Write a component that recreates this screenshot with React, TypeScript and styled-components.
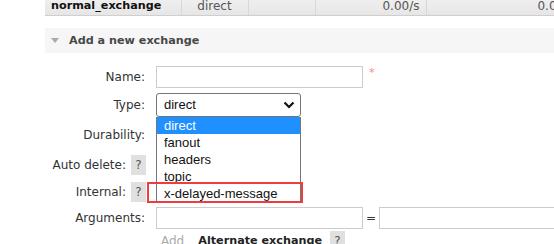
import React from 'react';
import styled, { createGlobalStyle } from 'styled-components';

const GlobalStyle = createGlobalStyle`
  html, body {
    margin: 0;
    padding: 0;
    background: #fff;
    overflow: hidden;
  }
  body {
    font-family: 'DejaVu Sans', Verdana, sans-serif;
    font-size: 12px;
    color: #333;
  }
`;

const Page = styled.div`
  width: 554px;
  height: 244px;
  overflow: hidden;
  padding-left: 45px;
  box-sizing: border-box;
`;

const ListTable = styled.table`
  border-collapse: collapse;
  table-layout: fixed;
  width: 536px;
  margin-top: -3px;
`;

const Cell = styled.td<{ w: number; align?: 'left' | 'center' | 'right'; strong?: boolean }>`
  width: ${(p) => p.w}px;
  height: 18px;
  padding: 0 6px;
  box-sizing: border-box;
  background: linear-gradient(#f0f0f0, #e6e6e6);
  border-bottom: 1px solid #cfcfcf;
  border-right: 1px solid #d8d8d8;
  text-align: ${(p) => p.align || 'left'};
  font-weight: ${(p) => (p.strong ? 'bold' : 'normal')};
  font-size: ${(p) => (p.strong ? '11.2px' : '12px')};
  color: ${(p) => (p.strong ? '#111' : '#555')};
  white-space: nowrap;
  overflow: hidden;
`;

const SectionHead = styled.div`
  margin-top: 12px;
  height: 25px;
  background: #f6f6f6;
  display: flex;
  align-items: center;
  padding-left: 6px;
  gap: 10px;
  font-weight: bold;
  font-size: 11.2px;
  color: #484848;
`;

const Caret = styled.span`
  width: 0;
  height: 0;
  border-left: 4px solid transparent;
  border-right: 4px solid transparent;
  border-top: 5px solid #aaa;
`;

const Form = styled.div`
  margin-top: 10px;
  display: grid;
  grid-template-columns: 100px 1fr;
  grid-template-rows: 28px 28px 33px 26px 29px 22px 24px;
  column-gap: 11px;
`;

const Label = styled.div`
  display: flex;
  justify-content: flex-end;
  align-items: center;
  gap: 5px;
  color: #333;
  white-space: nowrap;
`;

const Help = styled.span`
  width: 15px;
  height: 20px;
  background: #e0e0e0;
  color: #555;
  display: flex;
  align-items: center;
  justify-content: center;
  margin-right: -1px;
  font-weight: normal;
  font-size: 12px;
`;

const Field = styled.div`
  display: flex;
  align-items: center;
  position: relative;
  white-space: nowrap;
`;

const TextInput = styled.div<{ w: number }>`
  width: ${(p) => p.w}px;
  height: 22px;
  border: 1px solid #cccccc;
  box-sizing: border-box;
  background: #fff;
  flex-shrink: 0;
`;

const Required = styled.span`
  color: #f48a8a;
  margin-left: 6px;
  margin-top: -8px;
  font-size: 11px;
`;

const Equals = styled.span`
  margin: 0 3px;
  color: #333;
`;

const Select = styled.div`
  width: 145px;
  height: 24px;
  border: 1px solid #767676;
  border-radius: 3px;
  box-sizing: border-box;
  display: flex;
  align-items: center;
  justify-content: space-between;
  padding: 0 5px 0 7px;
  font-family: 'Liberation Sans', Arial, sans-serif;
  font-size: 13px;
  color: #111;
  background: #fff;
`;

const OptionList = styled.ul`
  position: absolute;
  left: 0;
  top: 26px;
  width: 145px;
  margin: 0;
  padding: 0;
  list-style: none;
  box-sizing: border-box;
  border: 1px solid #767676;
  border-top: none;
  background: #fff;
  font-family: 'Liberation Sans', Arial, sans-serif;
  font-size: 13px;
  z-index: 2;
`;

const Option = styled.li<{ selected?: boolean }>`
  height: 17px;
  line-height: 17px;
  padding-left: 7px;
  background: ${(p) => (p.selected ? '#1e90ff' : '#fff')};
  color: ${(p) => (p.selected ? '#fff' : '#111')};
`;

const Highlight = styled.div`
  position: absolute;
  left: -9px;
  top: 91px;
  width: 156px;
  height: 21px;
  border: 2px solid #f03c3c;
  box-sizing: border-box;
  z-index: 3;
`;

const AddLink = styled.span`
  color: #aaa;
  margin-left: 5px;
  margin-right: 14px;
`;

const SubLabel = styled.span`
  font-weight: bold;
  font-size: 11.2px;
  color: #222;
  margin-right: 8px;
`;

const Chevron = () => (
  <svg width="12" height="8" viewBox="0 0 12 8">
    <path d="M1.5 1.5 L6 6 L10.5 1.5" fill="none" stroke="#111" strokeWidth="2.2" />
  </svg>
);

const types = ['direct', 'fanout', 'headers', 'topic', 'x-delayed-message'];

export default function App() {
  return (
    <Page>
      <GlobalStyle />
      <ListTable>
        <tbody>
          <tr>
            <Cell w={136} strong>normal_exchange</Cell>
            <Cell w={67} align="center">direct</Cell>
            <Cell w={67}></Cell>
            <Cell w={111} align="right">0.00/s</Cell>
            <Cell w={155} align="right">0.00/s</Cell>
          </tr>
        </tbody>
      </ListTable>

      <SectionHead>
        <Caret />
        Add a new exchange
      </SectionHead>

      <Form>
        <Label>Name:</Label>
        <Field>
          <TextInput w={207} />
          <Required>*</Required>
        </Field>

        <Label>Type:</Label>
        <Field>
          <Select>
            direct
            <Chevron />
          </Select>
          <OptionList>
            {types.map((t, i) => (
              <Option key={t} selected={i === 0}>{t}</Option>
            ))}
          </OptionList>
          <Highlight />
        </Field>

        <Label>Durability:</Label>
        <Field />

        <Label>Auto delete: <Help>?</Help></Label>
        <Field />

        <Label>Internal: <Help>?</Help></Label>
        <Field />

        <Label>Arguments:</Label>
        <Field>
          <TextInput w={207} />
          <Equals>=</Equals>
          <TextInput w={200} />
        </Field>

        <div />
        <Field>
          <AddLink>Add</AddLink>
          <SubLabel>Alternate exchange</SubLabel>
          <Help>?</Help>
        </Field>
      </Form>
    </Page>
  );
}
